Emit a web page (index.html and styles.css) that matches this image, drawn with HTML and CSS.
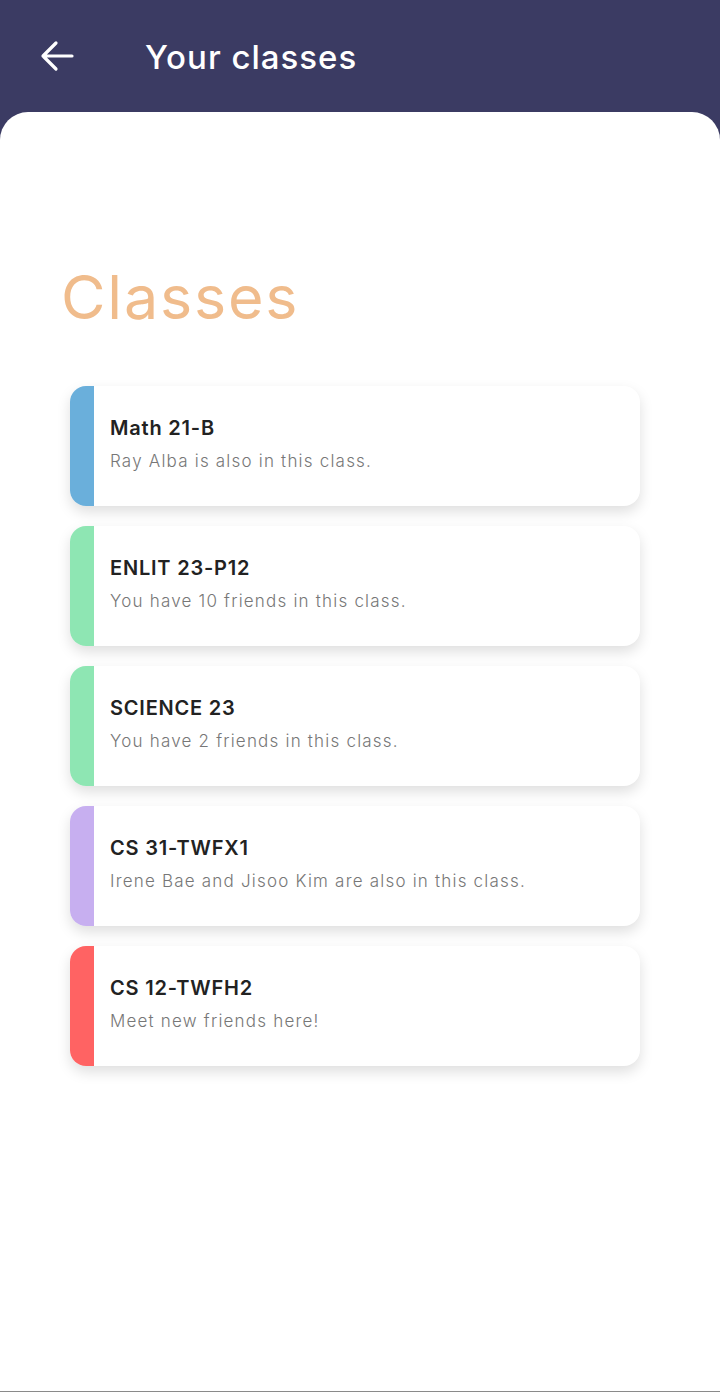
FILE: index.html
```html
<!DOCTYPE html>
<html lang="en">
<head>
<meta charset="utf-8">
<title>Your classes</title>
<link rel="stylesheet" href="styles.css">
</head>
<body>
<div class="app">
  <header class="topbar">
    <button class="back" aria-label="Back">
      <svg width="34" height="32" viewBox="0 0 34 32" fill="none" stroke="#fff" stroke-width="3.2" stroke-linecap="round" stroke-linejoin="round"><path d="M32 16H3M16 3L3 16L16 29"/></svg>
    </button>
    <h1 class="title">Your classes</h1>
  </header>
  <main class="sheet">
    <h2 class="heading">Classes</h2>
    <ul class="list">
      <li class="card"><span class="stripe blue"></span><div class="body"><div class="name">Math 21-B</div><div class="desc">Ray Alba is also in this class.</div></div></li>
      <li class="card"><span class="stripe green"></span><div class="body"><div class="name">ENLIT 23-P12</div><div class="desc">You have 10 friends in this class.</div></div></li>
      <li class="card"><span class="stripe green"></span><div class="body"><div class="name">SCIENCE 23</div><div class="desc">You have 2 friends in this class.</div></div></li>
      <li class="card"><span class="stripe purple"></span><div class="body"><div class="name">CS 31-TWFX1</div><div class="desc">Irene Bae and Jisoo Kim are also in this class.</div></div></li>
      <li class="card"><span class="stripe red"></span><div class="body"><div class="name">CS 12-TWFH2</div><div class="desc">Meet new friends here!</div></div></li>
    </ul>
  </main>
</div>
</body>
</html>
```
FILE: styles.css
```css
* { box-sizing: border-box; }
html, body { margin: 0; padding: 0; }
body {
  background: #3b3b63;
  font-family: "Inter", "Noto Sans", sans-serif;
  width: 720px;
  height: 1392px;
  overflow: hidden;
}
.app {
  display: flex;
  flex-direction: column;
  height: 1392px;
  border-bottom: 1px solid #8a8a8a;
}
.topbar {
  height: 112px;
  display: flex;
  align-items: center;
  padding: 0 0 0 40px;
}
.back {
  background: none;
  border: 0;
  padding: 0;
  width: 34px;
  height: 32px;
  display: flex;
  margin-top: -1px;
}
.title {
  margin: 2px 0 0 71px;
  color: #fff;
  font-size: 33px;
  font-weight: 500;
  letter-spacing: 1px;
}
.sheet {
  flex: 1;
  background: #fff;
  border-radius: 28px 28px 0 0;
  padding: 145px 80px 0 70px;
}
.heading {
  margin: 0 0 49px -9px;
  font-size: 61px;
  line-height: 80px;
  font-weight: 400;
  color: #f0bc8c;
  letter-spacing: 1.8px;
}
.list {
  list-style: none;
  margin: 0;
  padding: 0;
  display: flex;
  flex-direction: column;
  gap: 20px;
}
.card {
  display: flex;
  height: 120px;
  background: #fff;
  border-radius: 16px;
  overflow: hidden;
  box-shadow: 0 6px 14px rgba(0,0,0,0.13);
}
.stripe { width: 24px; flex: none; }
.blue { background: #6aafdb; }
.green { background: #8ee6b3; }
.purple { background: #c7aff0; }
.red { background: #ff6363; }
.body {
  padding: 27px 16px 0 16px;
}
.name {
  font-size: 20px;
  line-height: 30px;
  font-weight: 600;
  color: #222;
  letter-spacing: 0.8px;
}
.desc {
  margin-top: 6px;
  font-size: 17px;
  line-height: 24px;
  font-weight: 300;
  color: #777;
  letter-spacing: 1.2px;
}
```
